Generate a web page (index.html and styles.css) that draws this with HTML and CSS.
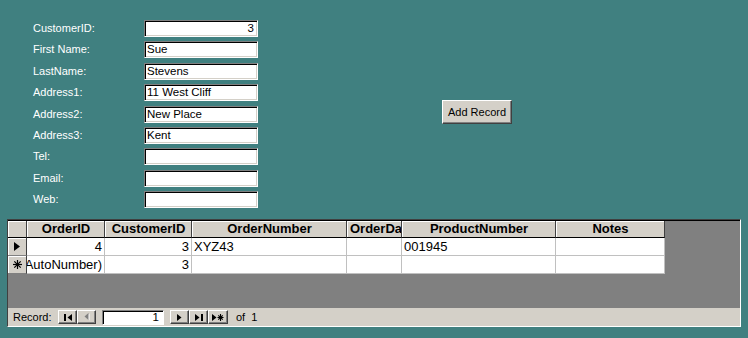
FILE: index.html
```html
<!DOCTYPE html>
<html>
<head>
<meta charset="utf-8">
<link rel="stylesheet" href="styles.css">
</head>
<body>
<div class="page">
  <div class="top">
    <div class="form">
      <div class="lbl">CustomerID:</div><div class="tb num">3</div>
      <div class="lbl">First Name:</div><div class="tb">Sue</div>
      <div class="lbl">LastName:</div><div class="tb">Stevens</div>
      <div class="lbl">Address1:</div><div class="tb">11 West Cliff</div>
      <div class="lbl">Address2:</div><div class="tb">New Place</div>
      <div class="lbl">Address3:</div><div class="tb">Kent</div>
      <div class="lbl">Tel:</div><div class="tb"></div>
      <div class="lbl">Email:</div><div class="tb"></div>
      <div class="lbl">Web:</div><div class="tb"></div>
    </div>
    <button class="btn">Add Record</button>
  </div>

  <div class="ds">
    <div class="grid">
      <div class="hd sel"></div>
      <div class="hd">OrderID</div>
      <div class="hd">CustomerID</div>
      <div class="hd">OrderNumber</div>
      <div class="hd">OrderDate</div>
      <div class="hd">ProductNumber</div>
      <div class="hd">Notes</div>

      <div class="sel"><svg width="6" height="9" viewBox="0 0 6 9"><polygon points="0,0 6,4.5 0,9" fill="#000"/></svg></div>
      <div class="c r"><span>4</span></div>
      <div class="c r"><span>3</span></div>
      <div class="c">XYZ43</div>
      <div class="c"></div>
      <div class="c">001945</div>
      <div class="c"></div>

      <div class="sel"><svg width="9" height="9" viewBox="0 0 9 9"><g stroke="#000" stroke-width="1.2"><line x1="4.5" y1="0" x2="4.5" y2="9"/><line x1="0" y1="4.5" x2="9" y2="4.5"/><line x1="1.3" y1="1.3" x2="7.7" y2="7.7"/><line x1="7.7" y1="1.3" x2="1.3" y2="7.7"/></g></svg></div>
      <div class="c r"><span>(AutoNumber)</span></div>
      <div class="c r"><span>3</span></div>
      <div class="c"></div>
      <div class="c"></div>
      <div class="c"></div>
      <div class="c"></div>
    </div>
    <div class="fill"></div>
    <div class="nav">
      <span class="reclbl">Record:</span>
      <span class="nb"><svg width="8" height="7" viewBox="0 0 8 7"><rect x="0" y="0" width="2" height="7" fill="#000"/><polygon points="3.5,3.5 8,0 8,7" fill="#000"/></svg></span>
      <span class="nb"><svg width="6" height="8" viewBox="0 0 6 8"><polygon points="1.5,4 5.5,0.5 5.5,7.5" fill="#fff"/><polygon points="0.5,3.5 4.5,0 4.5,7" fill="#808080"/></svg></span>
      <span class="navtb">1</span>
      <span class="nb"><svg width="5" height="7" viewBox="0 0 5 7"><polygon points="0,0 4.5,3.5 0,7" fill="#000"/></svg></span>
      <span class="nb"><svg width="8" height="7" viewBox="0 0 8 7"><polygon points="0,0 4.5,3.5 0,7" fill="#000"/><rect x="6" y="0" width="2" height="7" fill="#000"/></svg></span>
      <span class="nb wide"><svg width="12" height="7" viewBox="0 0 12 7"><polygon points="0,0 4.5,3.5 0,7" fill="#000"/><g stroke="#000" stroke-width="1.1"><line x1="8.5" y1="0" x2="8.5" y2="7"/><line x1="5.5" y1="3.5" x2="11.5" y2="3.5"/><line x1="6.3" y1="1.3" x2="10.7" y2="5.7"/><line x1="10.7" y1="1.3" x2="6.3" y2="5.7"/></g></svg></span>
      <span class="of">of&nbsp; 1</span>
    </div>
  </div>
</div>
</body>
</html>
```

FILE: styles.css
```css
html, body {
  margin: 0;
  padding: 0;
  background: #408080;
  font-family: "Liberation Sans", Arial, sans-serif;
}

.page {
  padding-top: 20px;
  width: 748px;
  height: 338px;
  box-sizing: border-box;
}

.top {
  display: flex;
  align-items: flex-start;
  padding-left: 33px;
}

.form {
  display: grid;
  grid-template-columns: 111px 114px;
  grid-auto-rows: 17px;
  row-gap: 4.375px;
}

.lbl {
  color: #ffffff;
  font-size: 11px;
  line-height: 17px;
}

.tb {
  box-sizing: border-box;
  height: 17px;
  background: #fff;
  border: 1px solid;
  border-color: #808080 #ffffff #ffffff #808080;
  box-shadow: inset 1px 1px 0 #000, inset -1px -1px 0 #d4d0c8;
  font-size: 11.5px;
  line-height: 15px;
  padding: 0 3px 0 2px;
  color: #000;
  white-space: nowrap;
  overflow: hidden;
}

.tb.num {
  text-align: right;
}

.btn {
  margin-left: 184px;
  margin-top: 80px;
  width: 70px;
  height: 24px;
  box-sizing: border-box;
  background: #d4d0c8;
  border: 1px solid;
  border-color: #ffffff #404040 #404040 #ffffff;
  box-shadow: inset -1px -1px 0 #808080;
  font-family: "Liberation Sans", Arial, sans-serif;
  font-size: 11px;
  color: #000;
  padding: 0;
}

.ds {
  margin: 11px 0 0 7px;
  width: 734px;
  height: 108px;
  box-sizing: border-box;
  border: 1px solid;
  border-color: #404040 #ffffff #ffffff #404040;
  box-shadow: inset 0 1px 0 #000;
  padding-top: 1px;
  background: #808080;
  display: flex;
  flex-direction: column;
}

.grid {
  display: grid;
  grid-template-columns: 19px 78px 87px 155px 55px 154px 109px;
  grid-template-rows: 17px 18px 18px;
  width: 657px;
}

.grid > div {
  box-sizing: border-box;
  overflow: hidden;
  white-space: nowrap;
}

.hd {
  background: #d4d0c8;
  border-right: 1px solid #404040;
  border-bottom: 1px solid #000;
  box-shadow: inset 1px 1px 0 #fff;
  font-weight: bold;
  font-size: 13px;
  line-height: 16px;
  text-align: center;
  color: #000;
  padding: 0 2px 0 3px;
}

.sel {
  background: #d4d0c8;
  border-right: 1px solid #404040;
  border-bottom: 1px solid #808080;
  box-shadow: inset 1px 1px 0 #fff;
  display: flex;
  align-items: center;
  justify-content: center;
}

.hd.sel {
  border-bottom: 1px solid #000;
  padding: 0;
}

.c {
  background: #fff;
  border-right: 1px solid #c0c0c0;
  border-bottom: 1px solid #c0c0c0;
  font-size: 13px;
  line-height: 18px;
  padding: 0 2px;
  color: #000;
}

.c.r {
  display: flex;
  justify-content: flex-end;
}

.c.r span {
  flex: none;
}

.fill {
  flex: 1;
}

.nav {
  height: 18px;
  background: #d4d0c8;
  display: flex;
  align-items: center;
  padding-left: 5px;
  font-size: 11px;
  color: #000;
}

.reclbl {
  width: 45px;
}

.nb {
  box-sizing: border-box;
  width: 19px;
  height: 14px;
  background: #d4d0c8;
  border: 1px solid;
  border-color: #ffffff #404040 #404040 #ffffff;
  box-shadow: inset -1px -1px 0 #808080;
  display: flex;
  align-items: center;
  justify-content: center;
}

.nb.wide {
  width: 20px;
}

.navtb {
  box-sizing: border-box;
  width: 62px;
  height: 15px;
  margin: 0 6px;
  background: #fff;
  border: 1px solid;
  border-color: #808080 #ffffff #ffffff #808080;
  box-shadow: inset 1px 1px 0 #000;
  text-align: right;
  padding-right: 4px;
  line-height: 13px;
  font-size: 11.5px;
}

.of {
  margin-left: 8px;
}
```
